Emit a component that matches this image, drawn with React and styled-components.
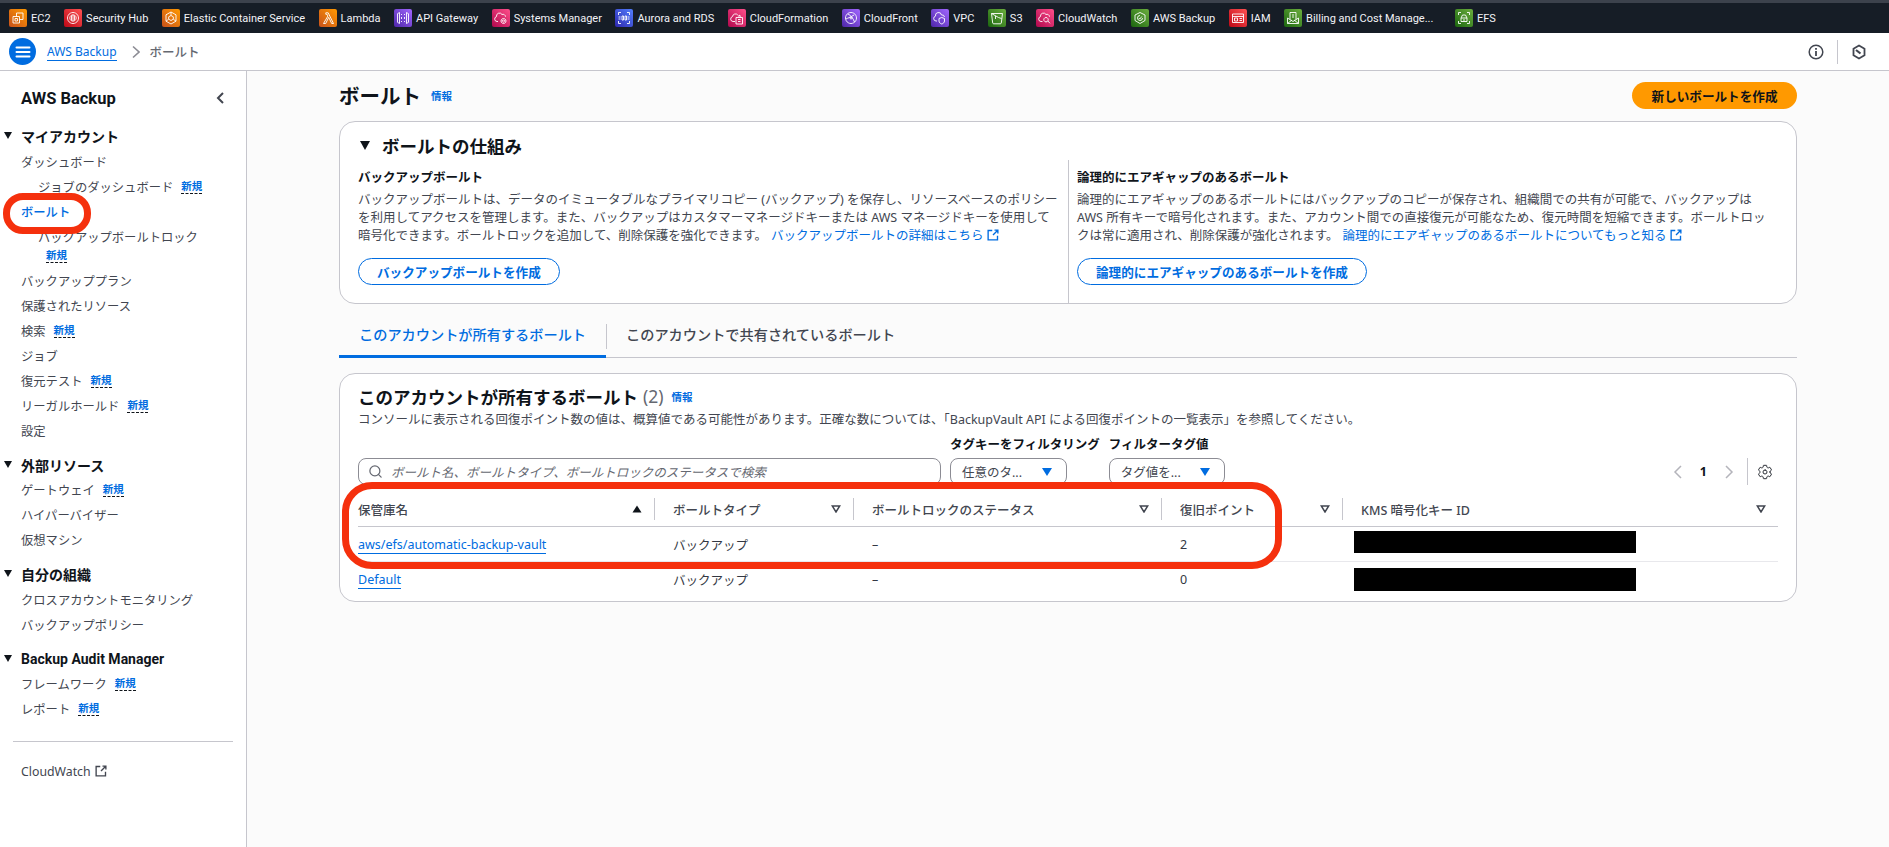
import React from "react";
import styled, { createGlobalStyle } from "styled-components";
import { FiSearch } from "react-icons/fi";
import { IoSettingsOutline } from "react-icons/io5";

const tones = {
    orange: ["#c8511b", "#ff9900"],
    red: ["#bd0816", "#ff5252"],
    purple: ["#4d27a8", "#a166ff"],
    pink: ["#b0084d", "#ff4f8b"],
    blue: ["#2e27ad", "#527fff"],
    green: ["#1b660f", "#6cae3e"],
};

const services = [
    { name: "EC2", tone: "orange", icon: "M4 7.500h6.500V14H4zM7.500 7.500V4H14v6.500h-3.500M6 9.500h2.500V12H6z" },
    { name: "Security Hub", tone: "red", icon: "M9 3.500a5.500 5.500 0 1 0 .01 0M9 5.800a3.200 3.200 0 1 0 .01 0M7.500 6.500v5M9 6v6M10.500 6.500v5" },
    { name: "Elastic Container Service", tone: "orange", icon: "M9 3l5 2.800v6.400L9 15l-5-2.800V5.800zM9 6.500l2.300 1.300v2.400L9 11.500l-2.300-1.300V7.800zM9 3v3.500M4 12.200l2.700-2M14 12.200l-2.700-2" },
    { name: "Lambda", tone: "orange", icon: "M4.500 14.500h2.200l3-6.200 3 6.200h1.800L9.200 3.800H6.800v1.500h1.300l.8 1.700z" },
    { name: "API Gateway", tone: "purple", icon: "M5.500 3.500L3.500 4.700v8.600l2 1.200zM12.500 3.500l2 1.200v8.600l-2 1.200zM7.500 5v1M7.500 8v2M7.500 12v1M10.500 5v1M10.500 8v2M10.500 12v1" },
    { name: "Systems Manager", tone: "pink", icon: "M6 12.500H5a2.500 2.500 0 0 1-.5-4.900A3 3 0 0 1 10 5.500a2.500 2.500 0 0 1 3.500 2.200M11.500 9.500a2.500 2.500 0 1 0 .01 0M11.500 11a1 1 0 1 0 .01 0" },
    { name: "Aurora and RDS", tone: "blue", icon: "M3.500 6V3.500H6M12 3.500h2.500V6M3.500 12v2.500H6M14.500 12v2.500H12M7 7v4M7 7h1.500v4H7M10 7h1.500v4H10zM3.500 8h2M3.500 10h2M12.500 8h2M12.500 10h2" },
    { name: "CloudFormation", tone: "pink", icon: "M7 12.500H5a2.500 2.500 0 0 1-.5-4.900A3 3 0 0 1 9.800 6M8 8.500h6.500V15H8zM10 10.500h2.500M10 12.500h2.500M11 8.500V6l2 1.500" },
    { name: "CloudFront", tone: "purple", icon: "M9 3.500a5.500 5.500 0 1 0 .01 0M6 5c2.500 1 5 4 6.500 8M4 10c2-1 4-1.500 8-4M9 8a1 1 0 1 0 .01 0" },
    { name: "VPC", tone: "purple", icon: "M6 12H5a2.500 2.500 0 0 1-.5-4.900A3 3 0 0 1 10.500 6 2.500 2.500 0 0 1 13.500 8M8 9.500l2.800-1 2.700 1v2.500c0 1.500-1.300 2.500-2.700 3-1.500-.5-2.800-1.500-2.800-3z" },
    { name: "S3", tone: "green", icon: "M3.500 4.500h11l-1.200 9.500a1 1 0 0 1-1 .8H5.700a1 1 0 0 1-1-.8zM3.500 4.500l7 4 3 1M7.500 7v3" },
    { name: "CloudWatch", tone: "pink", icon: "M6.500 12.500H5a2.500 2.500 0 0 1-.5-4.900A3 3 0 0 1 10 5.500a2.500 2.500 0 0 1 3.500 2.200M10 8.500a2.200 2.200 0 1 0 .01 0M11.700 11.800l2.300 2.500" },
    { name: "AWS Backup", tone: "green", icon: "M9 3.500l5 2.500v5.500L9 14.500l-5-3V6zM9 6.500a2.500 2.500 0 1 0 2.500 2.500M7.800 9l1 1 2-2.500" },
    { name: "IAM", tone: "red", icon: "M3.500 5h11v8.500h-11zM3.500 7.500h11M5.500 9h3v3h-3zM10.500 9.500h2.500M10.500 11.500h2.500" },
    { name: "Billing and Cost Manage...", tone: "green", extra: 8, icon: "M3.500 9l5.500 3.500L14.500 9v5.500h-11zM3.500 14.500L8 11M14.500 14.500L10 11M6 10.500V3.500h6v7M8 6h2M8 8h2" },
    { name: "EFS", tone: "green", icon: "M3.500 6V3.500H6M12 3.500h2.500V6M3.500 12v2.500H6M14.500 12v2.500H12M6 12.500V9l1.500-3h3L12 9v3.500zM6 9h6M8 11h2" },
];

const sections = [
    {
        title: "マイアカウント",
        items: [
            { label: "ダッシュボード" },
            { label: "ジョブのダッシュボード", sub: true, badge: true },
            { label: "ボールト", active: true },
            { label: "バックアップボールトロック", sub: true, badgeBelow: true },
            { label: "バックアッププラン" },
            { label: "保護されたリソース" },
            { label: "検索", badge: true },
            { label: "ジョブ" },
            { label: "復元テスト", badge: true },
            { label: "リーガルホールド", badge: true },
            { label: "設定" },
        ],
    },
    {
        title: "外部リソース",
        items: [
            { label: "ゲートウェイ", badge: true },
            { label: "ハイパーバイザー" },
            { label: "仮想マシン" },
        ],
    },
    {
        title: "自分の組織",
        items: [
            { label: "クロスアカウントモニタリング" },
            { label: "バックアップポリシー" },
        ],
    },
    {
        title: "Backup Audit Manager",
        items: [
            { label: "フレームワーク", badge: true },
            { label: "レポート", badge: true },
        ],
    },
];

const columns = [
    { label: "保管庫名", width: 297, asc: true },
    { label: "ボールトタイプ", width: 199 },
    { label: "ボールトロックのステータス", width: 308 },
    { label: "復旧ポイント", width: 181 },
    { label: "KMS 暗号化キー ID", width: 435, last: true },
];

const rows = [
    { name: "aws/efs/automatic-backup-vault", type: "バックアップ", lock: "–", points: "2", lift: 5, maskHeight: 22 },
    { name: "Default", type: "バックアップ", lock: "–", points: "0", lift: 0, maskHeight: 23 },
];

const External = () => (
    <ExternalSvg viewBox="0 0 16 16">
        <path d="M14 9v5.500H1.500V2H7M10 1.500h4.500V6M14 2L8 8" fill="none" stroke="currentColor" strokeWidth="1.800" />
    </ExternalSvg>
);

const SortIcon = ({ asc }) => (
    <SortSvg viewBox="0 0 10 8">
        {asc ? (
            <path d="M5 .5L9.500 7.500H.5z" fill="#0f141a" />
        ) : (
            <path d="M1.300 1h7.400L5 7z" fill="none" stroke="#424650" strokeWidth="1.500" />
        )}
    </SortSvg>
);

const App = () => {
    return (
        <>
            <GlobalStyle />
            <Page>
                <ServiceBar>
                    {services.map((s) => (
                        <Service key={s.name} $extra={s.extra}>
                            <ServiceIcon $tone={s.tone}>
                                <svg viewBox="0 0 18 18" width="18" height="18">
                                    <path d={s.icon} fill="none" stroke="#fff" strokeWidth="0.900" />
                                </svg>
                            </ServiceIcon>
                            {s.name}
                        </Service>
                    ))}
                </ServiceBar>

                <Crumbs>
                    <MenuButton>
                        <svg viewBox="0 0 18 18" width="18" height="18">
                            <path d="M2.500 4.500h13M2.500 9h13M2.500 13.500h13" stroke="#fff" strokeWidth="2" strokeLinecap="round" />
                        </svg>
                    </MenuButton>
                    <CrumbLink>AWS Backup</CrumbLink>
                    <CrumbArrow viewBox="0 0 8 14" width="8" height="14">
                        <path d="M1 1.500L7 7l-6 5.500" fill="none" stroke="#8c8c94" strokeWidth="1.600" />
                    </CrumbArrow>
                    <CrumbText>ボールト</CrumbText>
                    <CrumbTools>
                        <svg viewBox="0 0 16 16" width="16" height="16">
                            <circle cx="8" cy="8" r="6.800" fill="none" stroke="#424650" strokeWidth="1.500" />
                            <path d="M8 7v5M8 4v1.800" stroke="#424650" strokeWidth="1.800" />
                        </svg>
                        <CrumbDivider />
                        <svg viewBox="0 0 16 16" width="16" height="16">
                            <path d="M8 1.500l5.500 3.200v6.600L8 14.500l-5.500-3.200V4.700z" fill="none" stroke="#424650" strokeWidth="1.800" />
                            <path d="M5 6l4.500 3.500" stroke="#424650" strokeWidth="2.200" />
                        </svg>
                    </CrumbTools>
                </Crumbs>

                <Body>
                    <Sidebar>
                        <SideTitle>
                            AWS Backup
                            <svg viewBox="0 0 12 14" width="12" height="14">
                                <path d="M9 2L4 7l5 5" fill="none" stroke="#424650" strokeWidth="2" />
                            </svg>
                        </SideTitle>
                        {sections.map((sec) => (
                            <Section key={sec.title}>
                                <SectionTitle>
                                    <SideCaret />
                                    {sec.title}
                                </SectionTitle>
                                {sec.items.map((item) => (
                                    <React.Fragment key={item.label}>
                                        <NavItem $sub={item.sub} $active={item.active}>
                                            {item.label}
                                            {item.badge && <NewBadge>新規</NewBadge>}
                                        </NavItem>
                                        {item.badgeBelow && (
                                            <BadgeRow>
                                                <NewBadge>新規</NewBadge>
                                            </BadgeRow>
                                        )}
                                    </React.Fragment>
                                ))}
                            </Section>
                        ))}
                        <SideRule />
                        <SideFoot>
                            CloudWatch <External />
                        </SideFoot>
                        <NavCircle />
                    </Sidebar>

                    <Main>
                        <TitleRow>
                            <PageTitle>ボールト</PageTitle>
                            <Info>情報</Info>
                            <PrimaryButton>新しいボールトを作成</PrimaryButton>
                        </TitleRow>

                        <HowCard>
                            <HowTitle>
                                <HowCaret />
                                ボールトの仕組み
                            </HowTitle>
                            <HowColumns>
                                <HowColumn>
                                    <HowHeading>バックアップボールト</HowHeading>
                                    <HowText>
                                        バックアップボールトは、データのイミュータブルなプライマリコピー (バックアップ) を保存し、リソースベースのポリシー<br />
                                        を利用してアクセスを管理します。また、バックアップはカスタマーマネージドキーまたは AWS マネージドキーを使用して<br />
                                        暗号化できます。ボールトロックを追加して、削除保護を強化できます。
                                        <TextLink>バックアップボールトの詳細はこちら <External /></TextLink>
                                    </HowText>
                                    <OutlineButton>バックアップボールトを作成</OutlineButton>
                                </HowColumn>
                                <HowColumn $right>
                                    <HowHeading>論理的にエアギャップのあるボールト</HowHeading>
                                    <HowText>
                                        論理的にエアギャップのあるボールトにはバックアップのコピーが保存され、組織間での共有が可能で、バックアップは<br />
                                        AWS 所有キーで暗号化されます。また、アカウント間での直接復元が可能なため、復元時間を短縮できます。ボールトロッ<br />
                                        クは常に適用され、削除保護が強化されます。
                                        <TextLink>論理的にエアギャップのあるボールトについてもっと知る <External /></TextLink>
                                    </HowText>
                                    <OutlineButton>論理的にエアギャップのあるボールトを作成</OutlineButton>
                                </HowColumn>
                            </HowColumns>
                        </HowCard>

                        <Tabs>
                            <Tab $active>このアカウントが所有するボールト</Tab>
                            <Tab $divided>このアカウントで共有されているボールト</Tab>
                        </Tabs>

                        <TableCard>
                            <TableTitle>
                                このアカウントが所有するボールト <Count>(2)</Count>
                                <Info>情報</Info>
                            </TableTitle>
                            <TableNote>
                                コンソールに表示される回復ポイント数の値は、概算値である可能性があります。正確な数については、「BackupVault API による回復ポイントの一覧表示」を参照してください。
                            </TableNote>

                            <FilterRow>
                                <SearchBox>
                                    <FiSearch size={15} color="#656871" />
                                    ボールト名、ボールトタイプ、ボールトロックのステータスで検索
                                </SearchBox>
                                <FilterField>
                                    <FilterLabel>タグキーをフィルタリング</FilterLabel>
                                    <FilterSelect $width={117}>
                                        任意のタ...
                                        <SelectCaret />
                                    </FilterSelect>
                                </FilterField>
                                <FilterField>
                                    <FilterLabel>フィルタータグ値</FilterLabel>
                                    <FilterSelect $width={116}>
                                        タグ値を...
                                        <SelectCaret />
                                    </FilterSelect>
                                </FilterField>
                                <Pager>
                                    <svg viewBox="0 0 10 14" width="10" height="14">
                                        <path d="M8 1L2 7l6 6" fill="none" stroke="#b4b4bb" strokeWidth="1.500" />
                                    </svg>
                                    <PageNum>1</PageNum>
                                    <svg viewBox="0 0 10 14" width="10" height="14">
                                        <path d="M2 1l6 6-6 6" fill="none" stroke="#b4b4bb" strokeWidth="1.500" />
                                    </svg>
                                    <PagerDivider />
                                    <IoSettingsOutline size={16} color="#2b2f36" />
                                </Pager>
                            </FilterRow>

                            <VaultTable>
                                <thead>
                                    <tr>
                                        {columns.map((c) => (
                                            <HeadCell key={c.label} style={{ width: c.width }}>
                                                <HeadInner $last={c.last}>
                                                    {c.label}
                                                    <SortIcon asc={c.asc} />
                                                </HeadInner>
                                            </HeadCell>
                                        ))}
                                    </tr>
                                </thead>
                                <tbody>
                                    {rows.map((r) => (
                                        <tr key={r.name}>
                                            <Cell><VaultLink>{r.name}</VaultLink></Cell>
                                            <Cell>{r.type}</Cell>
                                            <Cell>{r.lock}</Cell>
                                            <Cell>{r.points}</Cell>
                                            <Cell><Redacted $lift={r.lift} $height={r.maskHeight} /></Cell>
                                        </tr>
                                    ))}
                                </tbody>
                            </VaultTable>
                            <TableMark />
                        </TableCard>
                    </Main>
                </Body>
            </Page>
        </>
    );
};

export default App;

const GlobalStyle = createGlobalStyle`
    html, body {
        margin: 0;
        padding: 0;
        background: #fff;
    }
    body {
        font-family: "Noto Sans", "Noto Sans CJK JP", sans-serif;
        color: #0f141a;
    }
`;

const Page = styled.div`
    width: 1889px;
    height: 847px;
    overflow: hidden;
    display: flex;
    flex-direction: column;
`;

const ServiceBar = styled.div`
    height: 30px;
    flex-shrink: 0;
    border-top: 3px solid #3c424c;
    background: #161d26;
    display: flex;
    align-items: center;
    padding-left: 9px;
    gap: 13.5px;
`;

const Service = styled.div`
    display: flex;
    align-items: center;
    gap: 4px;
    margin-right: ${(p) => p.$extra || 0}px;
    font-family: "Roboto", sans-serif;
    font-size: 11px;
    color: #f3f3f7;
    white-space: nowrap;
`;

const ServiceIcon = styled.span`
    width: 18px;
    height: 18px;
    border-radius: 2px;
    display: block;
    background: linear-gradient(45deg, ${(p) => tones[p.$tone][0]}, ${(p) => tones[p.$tone][1]});
    svg {
        display: block;
    }
`;

const Crumbs = styled.div`
    height: 37px;
    flex-shrink: 0;
    background: #fff;
    border-bottom: 1px solid #c6c6cd;
    display: flex;
    align-items: center;
    padding: 0 22px 0 9px;
    font-size: 12px;
`;

const MenuButton = styled.div`
    width: 27px;
    height: 27px;
    border-radius: 50%;
    background: #006ce0;
    display: flex;
    align-items: center;
    justify-content: center;
    margin-right: 11px;
`;

const CrumbLink = styled.span`
    color: #006ce0;
    border-bottom: 1px solid #006ce0;
    line-height: 17px;
`;

const CrumbArrow = styled.svg`
    margin: 0 10px 0 15px;
`;

const CrumbText = styled.span`
    color: #656871;
    font-size: 12.5px;
    font-weight: 500;
`;

const CrumbTools = styled.div`
    margin-left: auto;
    display: flex;
    align-items: center;
    gap: 13px;
`;

const CrumbDivider = styled.span`
    width: 1px;
    height: 24px;
    background: #c6c6cd;
`;

const Body = styled.div`
    flex: 1;
    display: flex;
    min-height: 0;
`;

const Sidebar = styled.nav`
    position: relative;
    width: 247px;
    flex-shrink: 0;
    box-sizing: border-box;
    border-right: 1px solid #c6c6cd;
    background: #fff;
    padding-top: 15px;
`;

const SideTitle = styled.div`
    display: flex;
    align-items: center;
    justify-content: space-between;
    height: 24px;
    padding: 0 20px 0 21px;
    font-family: "Roboto", "Noto Sans CJK JP", sans-serif;
    font-size: 16.5px;
    font-weight: 700;
    margin-bottom: 13px;
`;

const Section = styled.div`
    margin-bottom: 8.5px;
`;

const SectionTitle = styled.div`
    position: relative;
    height: 26px;
    padding-left: 21px;
    display: flex;
    align-items: center;
    font-family: "Roboto", "Noto Sans CJK JP", sans-serif;
    font-size: 14px;
    font-weight: 700;
`;

const SideCaret = styled.span`
    position: absolute;
    left: 4px;
    top: 9px;
    border-left: 4px solid transparent;
    border-right: 4px solid transparent;
    border-top: 7px solid #0f141a;
`;

const NavItem = styled.div`
    height: 25px;
    display: flex;
    align-items: center;
    padding-left: ${(p) => (p.$sub ? "38px" : "21px")};
    font-size: 12.3px;
    color: ${(p) => (p.$active ? "#006ce0" : "#424650")};
    font-weight: ${(p) => (p.$active ? 500 : 400)};
    white-space: nowrap;
`;

const BadgeRow = styled.div`
    padding-left: 46px;
    height: 19px;
    display: flex;
    align-items: flex-start;
`;

const NewBadge = styled.span`
    margin-left: 8px;
    font-size: 10.5px;
    font-weight: 700;
    color: #006ce0;
    border-bottom: 1px dashed #0f141a;
    line-height: 13px;
    ${BadgeRow} & {
        margin-left: 0;
    }
`;

const SideRule = styled.div`
    height: 1px;
    background: #c6c6cd;
    margin: 19px 13px 0;
`;

const SideFoot = styled.div`
    margin-top: 21px;
    padding-left: 21px;
    font-size: 12.3px;
    color: #424650;
    display: flex;
    align-items: center;
    gap: 4px;
`;

const NavCircle = styled.div`
    position: absolute;
    left: 3px;
    top: 122px;
    width: 88px;
    height: 41px;
    box-sizing: border-box;
    border: 7px solid #f5300d;
    border-radius: 20px;
`;

const ExternalSvg = styled.svg`
    width: 12px;
    height: 12px;
    vertical-align: -1px;
`;

const Main = styled.main`
    flex: 1;
    min-width: 0;
    background: #fbfbfb;
    padding: 11px 92px 0 92px;
`;

const TitleRow = styled.div`
    display: flex;
    align-items: center;
    height: 27px;
    margin-bottom: 12px;
`;

const PageTitle = styled.h1`
    margin: 0 10px 0 0;
    font-size: 20.5px;
    font-weight: 700;
    line-height: 26px;
`;

const Info = styled.span`
    margin-left: 8px;
    font-size: 10.5px;
    font-weight: 700;
    color: #006ce0;
    ${PageTitle} + & {
        margin-left: 0;
    }
`;

const PrimaryButton = styled.div`
    margin-left: auto;
    height: 27px;
    width: 165px;
    border-radius: 14px;
    background: #ff9900;
    color: #0f141a;
    font-size: 12.6px;
    font-weight: 700;
    display: flex;
    align-items: center;
    justify-content: center;
`;

const HowCard = styled.section`
    box-sizing: border-box;
    height: 183px;
    background: #fff;
    border: 1px solid #c6c6cd;
    border-radius: 16px;
    padding: 11px 18px 0;
`;

const HowTitle = styled.div`
    height: 25px;
    display: flex;
    align-items: center;
    gap: 12px;
    padding-left: 2px;
    font-size: 17.5px;
    font-weight: 700;
`;

const HowCaret = styled.span`
    border-left: 5px solid transparent;
    border-right: 5px solid transparent;
    border-top: 9px solid #0f141a;
`;

const HowColumns = styled.div`
    display: grid;
    grid-template-columns: 710px 1fr;
    margin-top: 2px;
`;

const HowColumn = styled.div`
    min-height: 135px;
    padding: ${(p) => (p.$right ? "9px 0 0 8px" : "9px 0 0 0")};
    border-left: ${(p) => (p.$right ? "1px solid #c6c6cd" : "none")};
`;

const HowHeading = styled.div`
    font-size: 12.5px;
    font-weight: 700;
    line-height: 18px;
    margin-bottom: 4px;
`;

const HowText = styled.div`
    font-size: 12.5px;
    line-height: 18px;
    color: #424650;
    white-space: nowrap;
`;

const TextLink = styled.span`
    margin-left: 4px;
    color: #006ce0;
`;

const OutlineButton = styled.div`
    display: inline-flex;
    align-items: center;
    height: 27px;
    box-sizing: border-box;
    padding: 0 18px;
    margin-top: 13px;
    border: 1px solid #006ce0;
    border-radius: 14px;
    background: #fff;
    color: #006ce0;
    font-size: 12.6px;
    font-weight: 700;
`;

const Tabs = styled.div`
    margin-top: 16px;
    height: 37px;
    display: flex;
    align-items: stretch;
    border-bottom: 1px solid #c6c6cd;
`;

const Tab = styled.div`
    position: relative;
    display: flex;
    align-items: center;
    box-sizing: border-box;
    height: 38px;
    padding: 0 20px 7px;
    font-size: 14.2px;
    font-weight: 500;
    color: ${(p) => (p.$active ? "#006ce0" : "#424650")};
    border-bottom: 3px solid ${(p) => (p.$active ? "#006ce0" : "transparent")};
    &::before {
        content: "";
        display: ${(p) => (p.$divided ? "block" : "none")};
        position: absolute;
        left: 0;
        top: 4px;
        height: 25px;
        width: 1px;
        background: #c6c6cd;
    }
`;

const TableCard = styled.section`
    position: relative;
    box-sizing: border-box;
    height: 229px;
    margin-top: 15px;
    background: #fff;
    border: 1px solid #c6c6cd;
    border-radius: 16px;
    padding: 11px 18px 0;
`;

const TableTitle = styled.div`
    display: flex;
    align-items: center;
    height: 22px;
    font-size: 17.5px;
    font-weight: 700;
`;

const Count = styled.span`
    font-weight: 400;
    color: #656871;
    margin-left: 5px;
`;

const TableNote = styled.div`
    margin-top: 5px;
    font-size: 12.5px;
    line-height: 16px;
    color: #424650;
    white-space: nowrap;
`;

const FilterRow = styled.div`
    display: flex;
    align-items: flex-end;
    margin-top: 9px;
    gap: 9px;
`;

const SearchBox = styled.div`
    width: 583px;
    height: 27px;
    box-sizing: border-box;
    border: 1px solid #8c8c94;
    border-radius: 8px;
    background: #fff;
    display: flex;
    align-items: center;
    gap: 8px;
    padding: 0 9px;
    font-size: 12.5px;
    font-style: italic;
    color: #656871;
`;

const FilterField = styled.div`
    display: flex;
    flex-direction: column;
    gap: 5px;
`;

const FilterLabel = styled.div`
    font-size: 12.5px;
    font-weight: 700;
    line-height: 16px;
    white-space: nowrap;
`;

const FilterSelect = styled.div`
    width: ${(p) => p.$width}px;
    height: 27px;
    box-sizing: border-box;
    border: 1px solid #8c8c94;
    border-radius: 8px;
    background: #fff;
    display: flex;
    align-items: center;
    justify-content: space-between;
    padding: 0 14px 0 11px;
    font-size: 12.5px;
    color: #424650;
`;

const SelectCaret = styled.span`
    border-left: 5px solid transparent;
    border-right: 5px solid transparent;
    border-top: 8px solid #006ce0;
`;

const Pager = styled.div`
    margin-left: auto;
    height: 27px;
    display: flex;
    align-items: center;
    color: #0f141a;
    padding-right: 5px;
`;

const PageNum = styled.span`
    margin: 0 17px;
    font-size: 12.5px;
    font-weight: 700;
`;

const PagerDivider = styled.span`
    width: 1px;
    height: 27px;
    background: #c6c6cd;
    margin: 0 9px 0 13px;
`;

const VaultTable = styled.table`
    width: 1420px;
    margin-top: 7px;
    border-collapse: collapse;
    table-layout: fixed;
`;

const HeadCell = styled.th`
    height: 34px;
    padding: 0;
    border-bottom: 1px solid #c6c6cd;
    text-align: left;
    font-size: 12.5px;
    font-weight: 500;
    color: #424650;
`;

const HeadInner = styled.div`
    display: flex;
    align-items: center;
    justify-content: space-between;
    height: 22px;
    padding-right: 12px;
    border-right: ${(p) => (p.$last ? "none" : "1px solid #c6c6cd")};
    th + th & {
        padding-left: 18px;
    }
`;

const SortSvg = styled.svg`
    width: 10px;
    height: 8px;
    flex-shrink: 0;
`;

const Cell = styled.td`
    height: 34px;
    padding: 0;
    font-size: 12.5px;
    color: #333843;
    border-bottom: 1px solid #e8e8ec;
    td + & {
        padding-left: 18px;
    }
    tr:last-child & {
        border-bottom: none;
    }
`;

const VaultLink = styled.span`
    color: #006ce0;
    border-bottom: 1px solid #006ce0;
`;

const Redacted = styled.div`
    width: 282px;
    height: ${(p) => p.$height}px;
    margin: -${(p) => p.$lift}px 0 0 -7px;
    background: #000;
`;

const TableMark = styled.div`
    position: absolute;
    left: 2px;
    top: 108px;
    width: 940px;
    height: 87px;
    box-sizing: border-box;
    border: 7px solid #f5300d;
    border-radius: 30px;
`;
